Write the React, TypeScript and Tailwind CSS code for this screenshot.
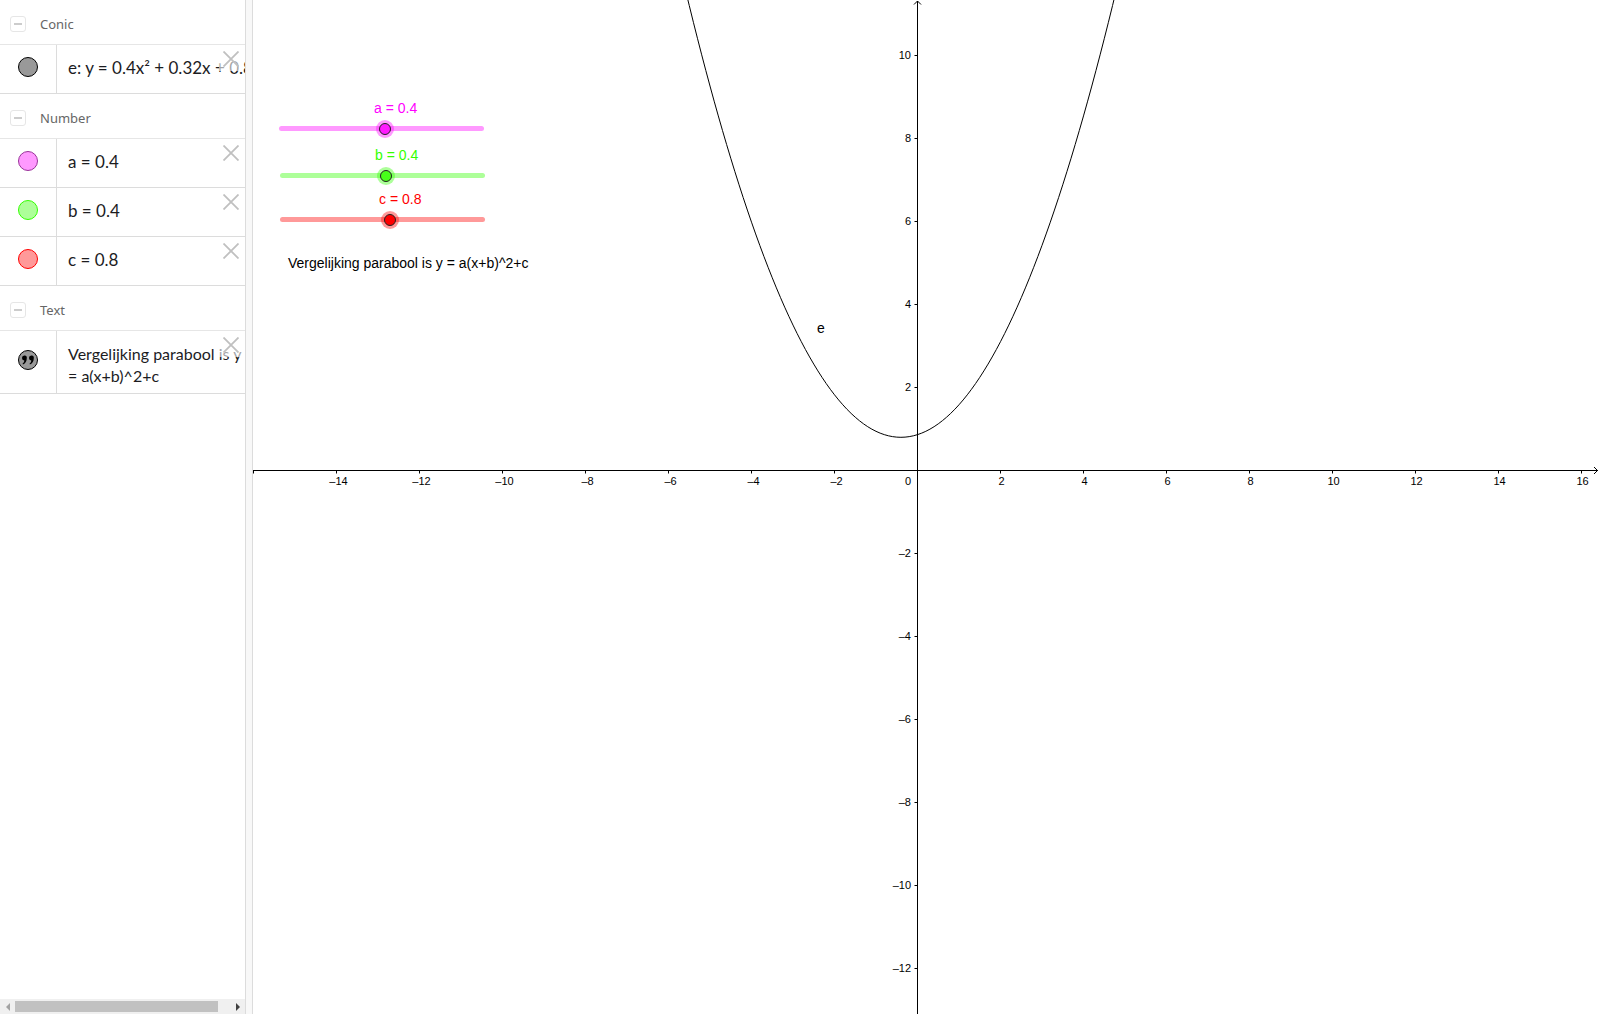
import React, { useState } from "react";

const UNIT = 41.5;
const ORIGIN_X = 664.5;
const ORIGIN_Y = 470.5;

const xTicks = [-16, -14, -12, -10, -8, -6, -4, -2, 2, 4, 6, 8, 10, 12, 14, 16];
const yTicks = [10, 8, 6, 4, 2, -2, -4, -6, -8, -10, -12];

const formatTick = (n: number) => (n < 0 ? `–${-n}` : `${n}`);

interface SectionProps {
  title: string;
  children: React.ReactNode;
}

const Section = ({ title, children }: SectionProps) => {
  const [open, setOpen] = useState(true);
  return (
    <section>
      <div className="flex h-[45px] items-center gap-[14px] border-b border-[#e6e6e6] pl-[10px] pt-1">
        <button
          type="button"
          aria-label={`Toggle ${title}`}
          onClick={() => setOpen(!open)}
          className="flex h-4 w-4 items-center justify-center rounded-[3px] border border-[#e6e6e6]"
        >
          <span className="h-0.5 w-2 bg-[#cccccc]" />
        </button>
        <h2 className="text-[13px] leading-5 text-[#666666]">{title}</h2>
      </div>
      {open && <ul>{children}</ul>}
    </section>
  );
};

interface RowProps {
  marble: string;
  quote?: boolean;
  children: React.ReactNode;
}

const Row = ({ marble, quote, children }: RowProps) => (
  <li className="relative flex border-b border-[#dcdcdc]">
    <div className="flex w-[57px] shrink-0 items-center justify-center border-r border-[#dcdcdc] pb-1">
      <button
        type="button"
        aria-label="Show or hide object"
        className={`flex h-5 w-5 items-center justify-center rounded-full border ${marble}`}
      >
        {quote && (
          <svg viewBox="0 0 14 12" className="h-3 w-[14px]" fill="#000">
            <path d="M3.300 1.500a2.300 2.300 0 0 1 2.500 2.500c0 3-1.300 5.500-3.800 6.500l-.5-.8c1.200-.8 1.800-1.800 1.800-3.200A2.400 2.400 0 0 1 1 4a2.400 2.400 0 0 1 2.300-2.500zM10.300 1.500a2.300 2.300 0 0 1 2.500 2.500c0 3-1.300 5.500-3.800 6.500l-.5-.8c1.200-.8 1.800-1.800 1.800-3.200A2.400 2.400 0 0 1 8 4a2.400 2.400 0 0 1 2.300-2.500z" />
          </svg>
        )}
      </button>
    </div>
    <div
      className={`min-w-0 flex-1 overflow-hidden pl-[11px] pt-3 font-[Lato,sans-serif] leading-[22px] text-[#1c1c1f] ${
        quote ? "pb-1.5 text-base" : "whitespace-nowrap pb-[14px] text-[17px]"
      }`}
    >
      {children}
    </div>
    <button
      type="button"
      aria-label="Delete"
      className="absolute right-0.5 top-0.5 flex h-6 w-6 items-center justify-center bg-white/60"
    >
      <svg viewBox="0 0 16 16" className="h-4 w-4" stroke="#c0c0c0" strokeWidth="1.8">
        <path d="M0.500 0.500l15 15M15.500 0.500l-15 15" />
      </svg>
    </button>
  </li>
);

interface SliderProps {
  name: string;
  value: number;
  onChange: (value: number) => void;
  place: string;
  labelStyle: string;
  color: string;
}

const Slider = ({ name, value, onChange, place, labelStyle, color }: SliderProps) => (
  <div className={`absolute w-[205px] ${place}`}>
    <label htmlFor={name} className={`block text-sm leading-5 ${labelStyle}`}>
      {name} = {value}
    </label>
    <input
      id={name}
      type="range"
      min={-10}
      max={10}
      step={0.1}
      value={value}
      onChange={(e) => onChange(Number(e.target.value))}
      className={`block mt-2 h-[5px] w-full appearance-none rounded-full [&::-webkit-slider-thumb]:h-3 [&::-webkit-slider-thumb]:w-3 [&::-webkit-slider-thumb]:appearance-none [&::-webkit-slider-thumb]:rounded-full [&::-webkit-slider-thumb]:border [&::-webkit-slider-thumb]:border-[#222222] ${color}`}
    />
  </div>
);

const Axes = () => (
  <g stroke="#000" fill="none">
    <line x1="0" y1={ORIGIN_Y} x2="100%" y2={ORIGIN_Y} />
    <line x1={ORIGIN_X} y1="1" x2={ORIGIN_X} y2="100%" />
    <path d={`M${ORIGIN_X - 3.5} 4.500l3.500 -3.500l3.500 3.500`} />
    <svg x="100%" y={ORIGIN_Y} overflow="visible">
      <path d="M-4 -3.500l3.500 3.500l-3.500 3.500" />
    </svg>
    {xTicks.map((n) => (
      <g key={n}>
        <path d={`M${ORIGIN_X + n * UNIT} ${ORIGIN_Y}v3`} />
        {n !== -16 && (
          <text
            x={ORIGIN_X + n * UNIT + (n < 0 ? 2 : 1)}
            y="485"
            textAnchor="middle"
            fill="#000"
            stroke="none"
          >
            {formatTick(n)}
          </text>
        )}
      </g>
    ))}
    {yTicks.map((n) => (
      <g key={n}>
        <path d={`M${ORIGIN_X} ${ORIGIN_Y - n * UNIT}h-3`} />
        <text x="658" y={ORIGIN_Y - n * UNIT + 3} textAnchor="end" fill="#000" stroke="none">
          {formatTick(n)}
        </text>
      </g>
    ))}
    <text x="658" y="485" textAnchor="end" fill="#000" stroke="none">
      0
    </text>
  </g>
);

const parabola = (a: number, b: number, c: number) => {
  const points = [];
  for (let x = -16; x <= 17; x += 0.1) {
    const y = a * (x + b) ** 2 + c;
    points.push(`${(ORIGIN_X + x * UNIT).toFixed(2)},${(ORIGIN_Y - y * UNIT).toFixed(2)}`);
  }
  return points.join(" ");
};

const App = () => {
  const [a, setA] = useState(0.4);
  const [b, setB] = useState(0.4);
  const [c, setC] = useState(0.8);

  return (
    <div className="flex h-screen overflow-hidden bg-white pb-0.5 pr-0.5 font-['Liberation_Sans',Arial,sans-serif] text-black">
      <aside className="flex w-[245px] shrink-0 flex-col justify-between font-['Noto_Sans',sans-serif]">
        <div>
          <Section title="Conic">
            <Row marble="border-black bg-[#999999]">e: y = 0.4x² + 0.32x + 0.86</Row>
          </Section>
          <Section title="Number">
            <Row marble="border-[#993399] bg-[#ff99ff]">a = {a}</Row>
            <Row marble="border-[#33ff00] bg-[#adff99]">b = {b}</Row>
            <Row marble="border-[#ff0000] bg-[#ff9999]">c = {c}</Row>
          </Section>
          <Section title="Text">
            <Row marble="border-black bg-[#999999]" quote>
              Vergelijking parabool is y = a(x+b)^2+c
            </Row>
          </Section>
        </div>
        <div className="flex h-[15px] items-center bg-[#f0f0f0]">
          <button type="button" aria-label="Scroll left" className="flex w-[15px] justify-center">
            <svg viewBox="0 0 4 8" className="h-2 w-1" fill="#a3a3a3">
              <path d="M4 0v8L0 4z" />
            </svg>
          </button>
          <div className="flex-1">
            <div className="h-[11px] w-[203px] bg-[#c1c1c1]" />
          </div>
          <button type="button" aria-label="Scroll right" className="flex w-[15px] justify-center">
            <svg viewBox="0 0 4 8" className="h-2 w-1" fill="#404040">
              <path d="M0 0v8l4-4z" />
            </svg>
          </button>
        </div>
      </aside>

      <div className="w-2 shrink-0 border-x border-[#dcdcdc] bg-[#f8f8f8]" />

      <main className="relative min-w-0 flex-1 overflow-hidden">
        <svg className="block h-full w-full text-[11px]">
          <Axes />
          <polyline points={parabola(a, b, c)} fill="none" stroke="#000" />
        </svg>
        <span className="absolute left-[564px] top-[318px] text-sm leading-5">e</span>

        <Slider
          name="a"
          value={a}
          onChange={setA}
          place="left-[26px] top-[98px]"
          labelStyle="pl-[95px] text-[#ff00ff]"
          color="bg-[#ff99ff] [&::-webkit-slider-thumb]:bg-[#ff1aff] [&::-webkit-slider-thumb]:shadow-[0_0_0_3px_#ff00ff66]"
        />
        <Slider
          name="b"
          value={b}
          onChange={setB}
          place="left-[27px] top-[145px]"
          labelStyle="pl-[95px] text-[#33ff00]"
          color="bg-[#adff99] [&::-webkit-slider-thumb]:bg-[#47ff1a] [&::-webkit-slider-thumb]:shadow-[0_0_0_3px_#33ff0066]"
        />
        <Slider
          name="c"
          value={c}
          onChange={setC}
          place="left-[27px] top-[189px]"
          labelStyle="pl-[99px] text-[#ff0000]"
          color="bg-[#ff9999] [&::-webkit-slider-thumb]:bg-[#ff0000] [&::-webkit-slider-thumb]:shadow-[0_0_0_3px_#ff000066]"
        />
        <p className="absolute left-[35px] top-[253px] whitespace-nowrap text-sm leading-5">
          Vergelijking parabool is y = a(x+b)^2+c
        </p>
      </main>
    </div>
  );
};

export default App;
